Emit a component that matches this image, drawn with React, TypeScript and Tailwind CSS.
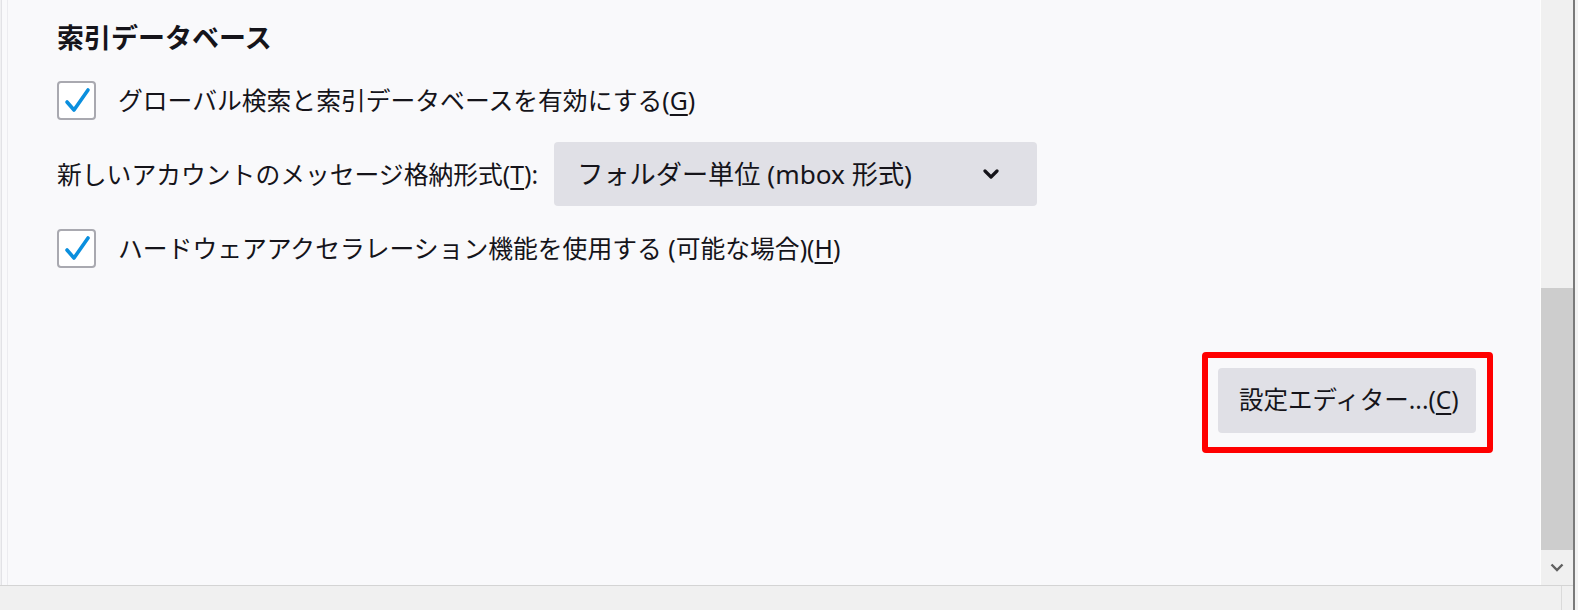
import React from "react";

function Check() {
  return (
    <div className="w-[39px] h-[39px] shrink-0 rounded-[4px] border-2 border-[#a9a9b0] bg-white flex items-center justify-center">
      <svg width="35" height="35" viewBox="0 0 35 35">
        <path d="M8 19 L15 27 L29 7" fill="none" stroke="#0a8fde" strokeWidth="3.6" strokeLinecap="round" strokeLinejoin="round" />
      </svg>
    </div>
  );
}

function U({ children }: { children: React.ReactNode }) {
  return <span className="underline underline-offset-[4px] decoration-[1.5px]">{children}</span>;
}

export default function App() {
  return (
    <div className="w-[1578px] h-[610px] flex bg-[#f0f0f0] text-[#15141a] font-['Noto_Sans','Noto_Sans_CJK_JP',sans-serif] overflow-hidden">
      <div className="w-[1573px] flex flex-col">
        <div className="h-[585px] flex">
          <div className="w-[1px] bg-[#f0f0f2]" />
          <div className="w-[1px] bg-[#e2e2e6]" />
          <div className="w-[5px] bg-[#f9f9fb]" />
          <div className="w-[1px] bg-[#ececf0]" />
          <main className="flex-1 bg-[#f9f9fb] pl-[49px] pt-[20px] flex flex-col">
            <h2 className="h-[36px] leading-[36px] text-[27px] font-bold">索引データベース</h2>
            <div className="mt-[25px] h-[39px] flex items-center gap-[22px] text-[24.8px]">
              <Check />
              <span className="leading-none">
                グローバル検索と索引データベースを有効にする(<U>G</U>)
              </span>
            </div>
            <div className="mt-[22px] h-[64px] flex items-center text-[24.8px]">
              <span className="leading-none">
                新しいアカウントのメッセージ格納形式(<U>T</U>):
              </span>
              <div className="ml-[16px] w-[483px] h-[64px] rounded-[4px] bg-[#e0e0e6] flex items-center justify-between pl-[23px] pr-[38px]">
                <span className="leading-none text-[26.2px]">フォルダー単位 (mbox 形式)</span>
                <svg width="16" height="10" viewBox="0 0 16 10">
                  <path d="M2 2 L8 8 L14 2" fill="none" stroke="#15141a" strokeWidth="3.2" strokeLinecap="round" strokeLinejoin="round" />
                </svg>
              </div>
            </div>
            <div className="mt-[23px] h-[39px] flex items-center gap-[22px] text-[24.8px]">
              <Check />
              <span className="leading-none">
                ハードウェアアクセラレーション機能を使用する (可能な場合)(<U>H</U>)
              </span>
            </div>
            <div className="mt-[84px] flex justify-end pr-[47px]">
              <div className="border-[6px] border-[#ff0000] rounded-[4px] pt-[10px] pb-[14px] pl-[10px] pr-[11px]">
                <div className="w-[258px] h-[65px] rounded-[4px] bg-[#e0e0e6] flex items-center pl-[21px] text-[24.5px]">
                  <span className="leading-none">
                    設定エディター...(<U>C</U>)
                  </span>
                </div>
              </div>
            </div>
          </main>
          <div className="w-[1px] bg-[#fdfdfd]" />
          <div className="w-[32px] bg-[#f0f0f0] flex flex-col">
            <div className="h-[288px]" />
            <div className="h-[262px] bg-[#cdcdcd]" />
            <div className="flex-1 flex items-center justify-center">
              <svg width="14" height="9" viewBox="0 0 14 9">
                <path d="M1.5 1.5 L7 7 L12.5 1.5" fill="none" stroke="#606060" strokeWidth="2.4" />
              </svg>
            </div>
          </div>
        </div>
        <div className="flex-1 border-t border-[#d4d4d4] bg-[#f0f0f0] flex">
          <div className="w-[1561px]" />
          <div className="w-[1px] bg-[#dadada]" />
        </div>
      </div>
      <div className="w-[2px] bg-[#7a7a7a]" />
      <div className="flex-1 bg-[#f3f3f3]" />
    </div>
  );
}
